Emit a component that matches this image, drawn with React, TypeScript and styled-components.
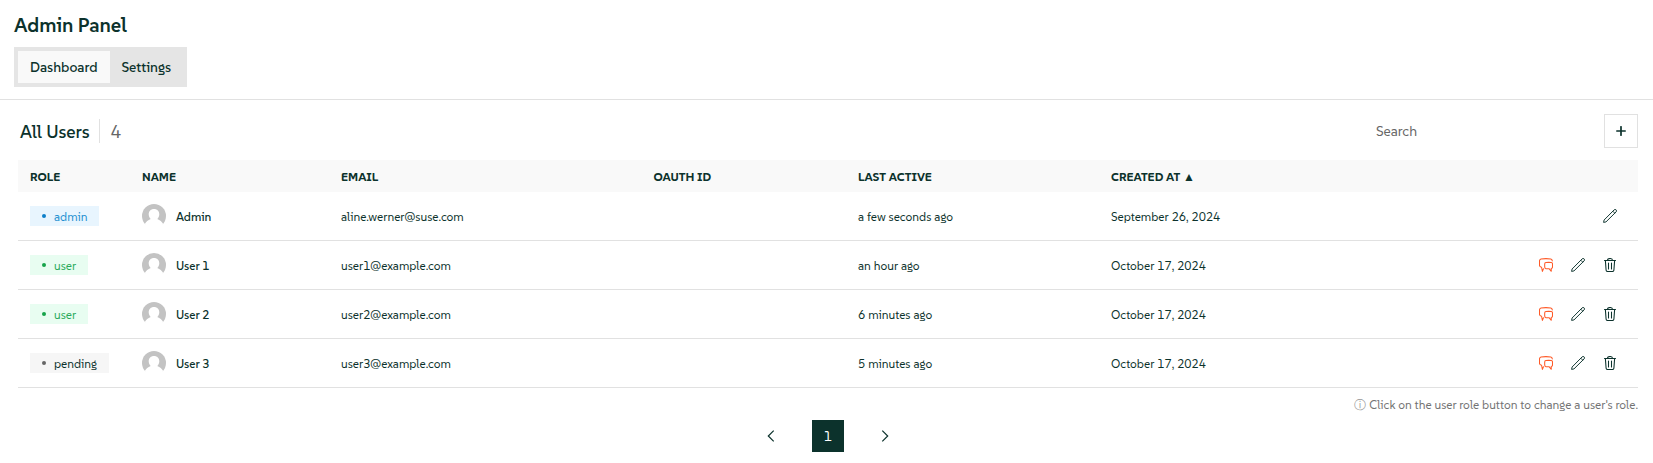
import React from "react";
import styled, { createGlobalStyle } from "styled-components";

const ink = "#0c322c";
const line = "#e1e1e1";

const GlobalStyle = createGlobalStyle`
  * { box-sizing: border-box; }
  body {
    margin: 0;
    background: #fff;
    color: ${ink};
    font-family: SUSE, "Noto Sans", sans-serif;
    font-size: 12px;
    line-height: 16px;
  }
  button { font: inherit; color: inherit; background: none; border: 0; padding: 0; }
`;

const Page = styled.div`
  height: 463px;
  overflow: hidden;
`;

const Header = styled.header`
  height: 100px;
  padding: 11px 14px 0;
  border-bottom: 1px solid ${line};
`;

const Title = styled.h1`
  margin: 0 0 8px;
  font-size: 20px;
  font-weight: 600;
  line-height: 28px;
`;

const Tabs = styled.nav`
  display: inline-flex;
  width: 173px;
  height: 40px;
  padding: 4px;
  background: #e5e5e5;
`;

const Tab = styled.button<{ $active?: boolean; $width: number }>`
  width: ${(p) => p.$width}px;
  height: 32px;
  padding-left: ${(p) => (p.$active ? 12 : 11.4)}px;
  text-align: left;
  font-size: 14px;
  font-weight: 500;
  background: ${(p) => (p.$active ? "#f9f9f9" : "transparent")};
`;

const Toolbar = styled.div`
  display: flex;
  align-items: center;
  height: 60px;
  padding: 2px 15px 0 20px;
`;

const Heading = styled.h2`
  width: 79px;
  margin: 0;
  padding-top: 1px;
  font-size: 18px;
  font-weight: 500;
  line-height: 24px;
  white-space: nowrap;
  word-spacing: 0.4px;
`;

const Count = styled.span`
  height: 24px;
  padding-left: 10.4px;
  border-left: 1px solid ${line};
  font-size: 18px;
  line-height: 25px;
  color: #666;
`;

const Search = styled.input`
  width: 216px;
  margin-left: auto;
  padding: 0;
  margin-right: 12px;
  border: 0;
  outline: 0;
  background: transparent;
  font: inherit;
  font-size: 14px;
  &::placeholder { color: #666; opacity: 1; }
`;

const AddButton = styled.button`
  display: grid;
  place-items: center;
  width: 34px;
  height: 34px;
  border: 1px solid ${line};
`;

const Table = styled.section`
  margin: 0 15px 0 18px;
`;

const Row = styled.div`
  display: grid;
  grid-template-columns: 112px 199px 312.5px 204.5px 253px 1fr auto;
  align-items: center;
  height: 49px;
  border-bottom: 1px solid ${line};
`;

const HeadRow = styled(Row)`
  height: 32px;
  border: 0;
  background: #f9f9f9;
  font-weight: 700;
`;

const Cell = styled.div<{ $space?: number }>`
  display: flex;
  align-items: center;
  padding-left: 12px;
  padding-top: 1px;
  white-space: nowrap;
  word-spacing: ${(p) => p.$space ?? 0}px;
`;

const MediaCell = styled(Cell)`
  padding-top: 0;
`;

const Name = styled.span`
  margin-left: 10px;
  padding-top: 1px;
  font-weight: 500;
`;

type Role = "admin" | "user" | "pending";

const roles: Record<Role, { width: number; fg: string; bg: string; dot: string }> = {
  admin: { width: 69, fg: "#1e90d0", bg: "#e8f5fe", dot: "#0d7fc9" },
  user: { width: 58, fg: "#2aab5b", bg: "#e8fdf1", dot: "#16a34a" },
  pending: { width: 79, fg: ink, bg: "#f6f6f6", dot: "#666" },
};

const Badge = styled.button<{ $role: Role }>`
  display: flex;
  align-items: center;
  width: ${(p) => roles[p.$role].width}px;
  height: 20px;
  padding: 1px 0 0 12px;
  color: ${(p) => roles[p.$role].fg};
  background: ${(p) => roles[p.$role].bg};
  &::before {
    content: "";
    width: 4px;
    height: 4px;
    margin: 0 8px 1px 0;
    border-radius: 50%;
    background: ${(p) => roles[p.$role].dot};
  }
`;

const Actions = styled.div`
  display: flex;
  justify-content: flex-end;
  padding-right: 12px;
`;

const IconButton = styled.button<{ $warm?: boolean }>`
  display: grid;
  place-items: center;
  width: 32px;
  height: 32px;
  color: ${(p) => (p.$warm ? "#fe5a28" : ink)};
`;

const Note = styled.p`
  height: 16px;
  margin: 9px 15px 7px;
  text-align: right;
  color: #737373;
  word-spacing: 0.1px;
`;

const InfoMark = styled.span`
  color: #999;
`;

const Pager = styled.nav`
  display: flex;
  justify-content: center;
  gap: 25px;
  height: 32px;
  padding-left: 3px;
`;

const PageButton = styled.button<{ $active?: boolean }>`
  display: grid;
  place-items: center;
  width: 32px;
  height: 32px;
  font-size: 14px;
  color: ${(p) => (p.$active ? "#fff" : ink)};
  background: ${(p) => (p.$active ? ink : "transparent")};
`;

const Avatar = () => (
  <svg width="24" height="24" viewBox="0 0 24 24">
    <circle cx="12" cy="12" r="12" fill="#c3c3c3" />
    <path d="M2.800 20c1.200-2.200 3.200-4 5.900-5C7.400 13.700 6.700 12 6.700 10.200 6.700 7 8.900 4.900 12 4.900s5.300 2.100 5.300 5.300c0 1.800-.7 3.500-2 4.800 2.700 1 4.700 2.800 5.900 5L19 24H5z" fill="#fff" />
  </svg>
);

const Plus = () => (
  <svg width="10" height="10" viewBox="0 0 10 10" stroke="currentColor" strokeWidth="1.7" strokeLinecap="round">
    <path d="M5 .8v8.400M.8 5h8.400" />
  </svg>
);

const Pencil = () => (
  <svg width="14" height="14" viewBox="0 0 14 14" fill="none" stroke="currentColor" strokeWidth=".95" strokeLinejoin="round">
    <path d="M.6 13.400 1.100 11 11.100.9a1.300 1.300 0 0 1 2 2L3 12.900zM9.800 2.200l2 2" />
  </svg>
);

const Trash = () => (
  <svg width="14" height="14" viewBox="0 0 14 14" fill="none" stroke="currentColor" strokeWidth="1.050" strokeLinecap="round" strokeLinejoin="round">
    <path d="M1.500 2.500h11M4.500 2.400c0-1.200.7-1.900 2.500-1.900s2.500.7 2.500 1.900M2.400 2.900l.7 9.200c.1.900.6 1.400 1.500 1.400h4.800c.9 0 1.400-.5 1.500-1.400l.7-9.200M5.500 5v6M8.500 5v6" />
  </svg>
);

const Chats = () => (
  <svg width="14" height="14" viewBox="0 0 14 14" fill="none" stroke="currentColor" strokeWidth="1.050" strokeLinecap="round" strokeLinejoin="round">
    <path d="M13.300 2.900Q13.100 1.400 11.800 1 7 .2 2 1 .7 1.300.5 2.700v4.800q.1 1.500 2.100 1.800l.8 4.100 1.100-2.600" />
    <path d="M7 4.600q2.800-.4 5.300 0 1.200.2 1.200 1.400v3q0 1.300-1.300 1.500l.1 2.800-2.300-2.600H7q-1.300-.2-1.300-1.700V6q0-1.200 1.300-1.400z" />
  </svg>
);

const Chevron = ({ d }: { d: string }) => (
  <svg width="8" height="12" viewBox="0 0 8 12" fill="none" stroke="currentColor" strokeWidth="1.200">
    <path d={d} />
  </svg>
);

const users: { role: Role; name: string; email: string; active: string; created: string }[] = [
  { role: "admin", name: "Admin", email: "aline.werner@suse.com", active: "a few seconds ago", created: "September 26, 2024" },
  { role: "user", name: "User 1", email: "user1@example.com", active: "an hour ago", created: "October 17, 2024" },
  { role: "user", name: "User 2", email: "user2@example.com", active: "6 minutes ago", created: "October 17, 2024" },
  { role: "pending", name: "User 3", email: "user3@example.com", active: "5 minutes ago", created: "October 17, 2024" },
];

export default function App() {
  return (
    <Page>
      <GlobalStyle />
      <Header>
        <Title>Admin Panel</Title>
        <Tabs>
          <Tab $active $width={92}>Dashboard</Tab>
          <Tab $width={73}>Settings</Tab>
        </Tabs>
      </Header>
      <Toolbar>
        <Heading>All Users</Heading>
        <Count>4</Count>
        <Search placeholder="Search" />
        <AddButton><Plus /></AddButton>
      </Toolbar>
      <Table>
        <HeadRow>
          <Cell>ROLE</Cell>
          <Cell>NAME</Cell>
          <Cell>EMAIL</Cell>
          <Cell>OAUTH ID</Cell>
          <Cell $space={1}>LAST ACTIVE</Cell>
          <Cell $space={0.5}>CREATED AT ▲</Cell>
        </HeadRow>
        {users.map((u) => (
          <Row key={u.name}>
            <MediaCell><Badge $role={u.role}>{u.role}</Badge></MediaCell>
            <MediaCell><Avatar /><Name>{u.name}</Name></MediaCell>
            <Cell>{u.email}</Cell>
            <Cell />
            <Cell $space={0.2}>{u.active}</Cell>
            <Cell $space={0.5}>{u.created}</Cell>
            <Actions>
              {u.role !== "admin" && <IconButton $warm><Chats /></IconButton>}
              <IconButton><Pencil /></IconButton>
              {u.role !== "admin" && <IconButton><Trash /></IconButton>}
            </Actions>
          </Row>
        ))}
      </Table>
      <Note><InfoMark>ⓘ</InfoMark> Click on the user role button to change a user's role.</Note>
      <Pager>
        <PageButton><Chevron d="M6.700.6 1.300 6l5.400 5.400" /></PageButton>
        <PageButton $active>1</PageButton>
        <PageButton><Chevron d="M1.300.6 6.700 6l-5.400 5.400" /></PageButton>
      </Pager>
    </Page>
  );
}
